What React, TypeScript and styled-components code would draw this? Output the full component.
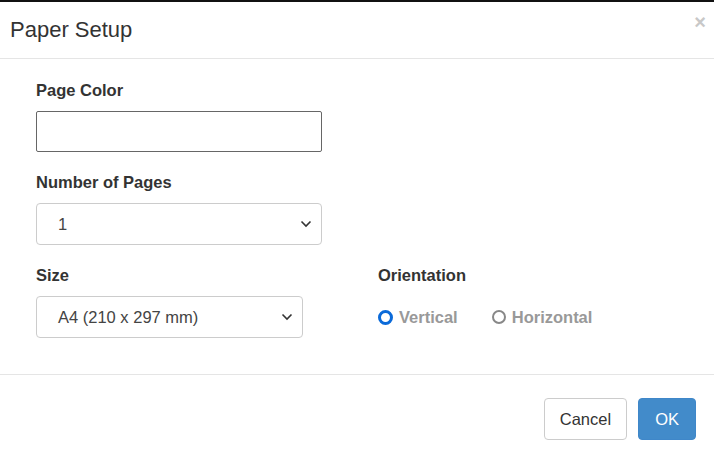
import React from "react";
import styled, { createGlobalStyle } from "styled-components";

const G = createGlobalStyle`
  body { margin:0; font-family:"Liberation Sans", Arial, sans-serif; background:#fff; color:#333; }
`;
const Dialog = styled.div`width:714px;height:455px;border-top:2px solid #111;box-sizing:border-box;background:#fff;display:flex;flex-direction:column;`;
const Header = styled.div`height:56px;flex:none;border-bottom:1px solid #e5e5e5;display:flex;align-items:center;justify-content:space-between;padding:0 8px 0 10px;`;
const Title = styled.h4`margin:0;font-size:22px;font-weight:400;color:#333;`;
const Close = styled.span`font-size:20px;font-weight:700;color:#c8c8c8;align-self:flex-start;margin-top:9px;`;
const Body = styled.div`padding:22px 36px 0;height:316px;flex:none;box-sizing:border-box;border-bottom:1px solid #e5e5e5;`;
const Label = styled.div`font-weight:700;font-size:16.5px;color:#333;margin-bottom:11px;`;
const Group = styled.div`margin-bottom:21px;`;
const Input = styled.div`width:286px;height:41px;box-sizing:border-box;border:1px solid #666;border-radius:2px;`;
const Select = styled.div<{ w: number }>`width:${p => p.w}px;height:42px;box-sizing:border-box;border:1px solid #ccc;border-radius:4px;display:flex;align-items:center;justify-content:space-between;padding:0 9px 0 21px;font-size:16.5px;color:#444;`;
const Row = styled.div`display:flex;gap:75px;`;
const Radios = styled.div`display:flex;gap:34px;height:42px;align-items:center;`;
const Radio = styled.div<{ on?: boolean }>`display:flex;align-items:center;gap:6px;font-size:16.5px;font-weight:700;color:#999;
  &::before{content:"";width:${p=>p.on?9:10}px;height:${p=>p.on?9:10}px;border-radius:50%;border:${p=>p.on?"3px solid #0b6ad9":"2px solid #888"};box-sizing:content-box;}`;
const Footer = styled.div`display:flex;justify-content:flex-end;gap:11px;padding:23px 18px 0;`;
const Btn = styled.button<{ primary?: boolean }>`height:42px;padding:0 ${p=>p.primary?16:15}px;font-size:16.5px;font-family:inherit;border-radius:4px;
  border:1px solid ${p=>p.primary?"#3f87c9":"#ccc"};background:${p=>p.primary?"#428bca":"#fff"};color:${p=>p.primary?"#fff":"#333"};`;
const Chev = () => (<svg width="12" height="8" viewBox="0 0 12 8"><path d="M1.5 1.5 6 6l4.5-4.5" fill="none" stroke="#333" strokeWidth="1.6"/></svg>);

export default function App() {
  return (<><G />
    <Dialog>
      <Header><Title>Paper Setup</Title><Close>×</Close></Header>
      <Body>
        <Group><Label>Page Color</Label><Input /></Group>
        <Group><Label>Number of Pages</Label><Select w={286}><span>1</span><Chev /></Select></Group>
        <Row>
          <div><Label>Size</Label><Select w={267}><span>A4 (210 x 297 mm)</span><Chev /></Select></div>
          <div><Label>Orientation</Label><Radios><Radio on>Vertical</Radio><Radio>Horizontal</Radio></Radios></div>
        </Row>
      </Body>
      <Footer><Btn>Cancel</Btn><Btn primary>OK</Btn></Footer>
    </Dialog></>);
}
